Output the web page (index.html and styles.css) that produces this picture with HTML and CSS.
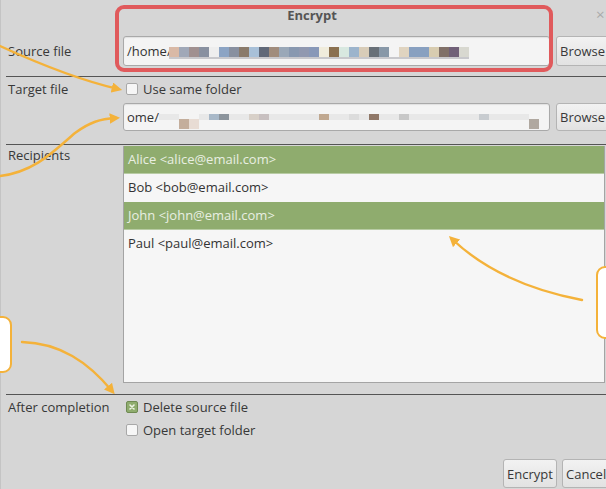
FILE: index.html
```html
<!DOCTYPE html>
<html>
<head>
<meta charset="utf-8">
<link rel="stylesheet" href="styles.css">
</head>
<body>
<div class="dialog">
  <div class="titlebar"><span class="title">Encrypt</span><span class="close">×</span></div>

  <div class="row source">
    <span class="lbl">Source file</span>
    <div class="field"><span class="ftext">/home/</span><span class="blur b-one"><i></i><i></i><i></i><i></i><i></i><i></i><i></i><i></i><i></i><i></i><i></i><i></i><i></i><i></i><i></i><i></i><i></i><i></i><i></i><i></i><i></i><i></i><i></i><i></i><i></i><i></i><i></i><i></i><i></i><i></i></span></div>
    <button class="btn browse">Browse</button>
  </div>
  <div class="sep"></div>

  <div class="row target">
    <span class="lbl">Target file</span>
    <span class="check"><span class="box"></span>Use same folder</span>
  </div>
  <div class="row target-input">
    <span class="lbl"></span>
    <div class="field small"><span class="ftext">ome/</span><span class="blur b-two"><i></i><i></i><i></i><i></i><i></i><i></i><i></i><i></i><i></i><i></i><i></i><i></i><i></i><i></i><i></i><i></i><i></i><i></i><i></i><i></i><i></i><i></i><i></i><i></i><i></i><i></i><i></i><i></i><i></i><i></i><i></i><i></i><i></i><i></i><i></i><i></i><i></i><i></i></span></div>
    <button class="btn browse small">Browse</button>
  </div>
  <div class="sep sep2"></div>

  <div class="row recipients">
    <span class="lbl top">Recipients</span>
    <div class="list">
      <div class="item sel">Alice &lt;alice@email.com&gt;</div>
      <div class="item">Bob &lt;bob@email.com&gt;</div>
      <div class="item sel">John &lt;john@email.com&gt;</div>
      <div class="item">Paul &lt;paul@email.com&gt;</div>
    </div>
  </div>
  <div class="sep sep3"></div>

  <div class="row after">
    <span class="lbl">After completion</span>
    <span class="check"><span class="box checked"><svg width="12" height="12" viewBox="0 0 12 12"><path d="M4 4 L8 8 M8 4 L4 8" stroke="#eef4e6" stroke-width="1.6" stroke-linecap="round"/></svg></span>Delete source file</span>
  </div>
  <div class="row after">
    <span class="lbl"></span>
    <span class="check"><span class="box"></span>Open target folder</span>
  </div>

  <div class="buttons">
    <button class="btn act">Encrypt</button>
    <button class="btn act cancel">Cancel</button>
  </div>
</div>

<svg class="annot" width="606" height="489" viewBox="0 0 606 489">
  <defs>
    <marker id="ah" viewBox="0 0 10 10" refX="6" refY="5" markerWidth="4.4" markerHeight="4.4" orient="auto">
      <path d="M0 0 L10 5 L0 10 z" fill="#f4b23a"/>
    </marker>
  </defs>
  <rect x="117" y="7" width="434" height="63" rx="7" fill="none" stroke="#e05a5c" stroke-width="4"/>
  <g fill="none" stroke="#f4b23a" stroke-width="2.4" stroke-linecap="round">
    <path d="M0 46 C35 62 75 79 118 89" marker-end="url(#ah)"/>
    <path d="M0 176 C35 172 55 150 75 133 C90 122 100 119 116 118" marker-end="url(#ah)"/>
    <path d="M582 300 C540 292 490 275 452 239" marker-end="url(#ah)"/>
    <path d="M22 342 C60 343 88 362 112 391" marker-end="url(#ah)"/>
  </g>
  <rect x="597" y="267" width="30" height="71" rx="8" fill="#ffffff" stroke="#f4b23a" stroke-width="2"/>
  <rect x="-20" y="317" width="31" height="55" rx="8" fill="#ffffff" stroke="#f4b23a" stroke-width="2"/>
</svg>
</body>
</html>
```

FILE: styles.css
```css
html, body {
  margin: 0;
  padding: 0;
}
body {
  width: 606px;
  height: 489px;
  overflow: hidden;
  background: #d6d6d6;
  font-family: "Open Sans", "Noto Sans", sans-serif;
  font-size: 13px;
  color: #383838;
  position: relative;
}
.dialog {
  padding-left: 7px;
  height: 489px;
  box-sizing: border-box;
  border-left: 1px solid #c4c4c4;
}
.titlebar {
  height: 36px;
  display: flex;
  align-items: flex-start;
}
.title {
  flex: 1;
  text-align: center;
  padding-left: 20px;
  line-height: 30px;
  font-weight: 700;
  color: #555;
}
.close {
  width: 10px;
  line-height: 28px;
  color: #aaa;
  font-size: 15px;
}
.row {
  display: flex;
  align-items: center;
}
.lbl {
  width: 115px;
  flex: none;
  white-space: nowrap;
}
.lbl.top {
  align-self: flex-start;
  line-height: 18px;
}
.source { height: 30px; }
.target { height: 24px; }
.target-input { height: 28px; margin-top: 2px; }
.after { height: 23px; }

.field {
  flex: none;
  width: 427px;
  height: 30px;
  box-sizing: border-box;
  border: 1px solid #a9a9a9;
  border-radius: 3px;
  background: #f4f4f4;
  box-shadow: inset 0 1px 1px rgba(0,0,0,0.08);
  display: flex;
  align-items: center;
  padding-left: 3px;
  overflow: hidden;
  white-space: nowrap;
}
.field.small { height: 28px; }
.ftext { color: #333; }
.blur {
  display: flex;
  align-items: center;
  height: 12px;
  filter: blur(0.4px);
}
.blur i {
  display: block;
  width: 10px;
  height: 10px;
  margin-top: 4px;
}
.b-one {
  margin-left: -3px;
  border-bottom: 2px solid #c8c8cc;
  padding-bottom: 1px;
}
.b-one i:nth-child(1) { background: #d9b9a6; }
.b-one i:nth-child(2) { background: #a0a8b8; }
.b-one i:nth-child(3) { background: #a09090; }
.b-one i:nth-child(4) { background: #8890a0; }
.b-one i:nth-child(5) { background: #eeeeee; }
.b-one i:nth-child(6) { background: #8ca4c4; }
.b-one i:nth-child(7) { background: #8890a0; }
.b-one i:nth-child(8) { background: #8a7a6a; }
.b-one i:nth-child(9) { background: #a8c0d8; }
.b-one i:nth-child(10) { background: #606878; }
.b-one i:nth-child(11) { background: #a08c7c; }
.b-one i:nth-child(12) { background: #9aa8b8; }
.b-one i:nth-child(13) { background: #8898b0; }
.b-one i:nth-child(14) { background: #9098b0; }
.b-one i:nth-child(15) { background: #8898b8; }
.b-one i:nth-child(16) { background: #f0ecdc; }
.b-one i:nth-child(17) { background: #8a7050; }
.b-one i:nth-child(18) { background: #d8e8e0; }
.b-one i:nth-child(19) { background: #9cb4cc; }
.b-one i:nth-child(20) { background: #d8ccb8; }
.b-one i:nth-child(21) { background: #687078; }
.b-one i:nth-child(22) { background: #8898a8; }
.b-one i:nth-child(23) { background: #f4f4f4; }
.b-one i:nth-child(24) { background: #e0d4c0; }
.b-one i:nth-child(25) { background: #88a0c0; }
.b-one i:nth-child(26) { background: #88a0c0; }
.b-one i:nth-child(27) { background: #d8ccb0; }
.b-one i:nth-child(28) { background: #807068; }
.b-one i:nth-child(29) { background: #706078; }
.b-one i:nth-child(30) { background: #d8d8d0; }

.b-two i {
  height: 6px;
  margin-top: 0;
  background: #e8e8e8;
}
.b-two i:nth-child(3) { background: #c4ae9c; height: 10px; margin-top: 14px; }
.b-two i:nth-child(4) { background: #e8dcd4; height: 10px; margin-top: 14px; }
.b-two i:nth-child(6) { background: #a8b8c8; }
.b-two i:nth-child(7) { background: #8c949c; }
.b-two i:nth-child(10) { background: #d8d0c8; }
.b-two i:nth-child(11) { background: #c8c0c0; }
.b-two i:nth-child(17) { background: #c0a890; }
.b-two i:nth-child(20) { background: #dcdcdc; }
.b-two i:nth-child(22) { background: #907868; }
.b-two i:nth-child(25) { background: #c8c8c8; }
.b-two i:nth-child(33) { background: #c8ccd0; }
.b-two i:nth-child(38) { background: #b0a8a0; height: 10px; margin-top: 14px; }

.btn {
  font-family: inherit;
  font-size: 13px;
  color: #383838;
  background: linear-gradient(#f2f2f2, #e2e2e2);
  border: 1px solid #b4b4b4;
  border-radius: 3px;
  padding: 0 3px;
  margin: 0;
  flex: none;
}
.browse {
  height: 30px;
  margin-left: 6px;
  width: 60px;
  text-align: left;
}
.browse.small { height: 28px; }

.sep {
  height: 1px;
  background: #555;
  margin-left: -2px;
  margin-top: 10px;
}
.sep2 { margin-top: 13px; }
.sep3 { margin-top: 11px; }

.check {
  display: flex;
  align-items: center;
  margin-left: 3px;
  white-space: nowrap;
}
.box {
  width: 12px;
  height: 12px;
  box-sizing: border-box;
  border: 1px solid #a8a8a8;
  border-radius: 2px;
  background: #f6f6f6;
  margin-right: 5px;
  display: flex;
}
.box.checked {
  background: #8fac6e;
  border-color: #6f8a52;
}
.box.checked svg { margin: -1px; }

.recipients {
  margin-top: 1px;
  align-items: flex-start;
}
.list {
  width: 482px;
  height: 237px;
  box-sizing: border-box;
  border: 1px solid #a4a4a4;
  border-top: none;
  background: #f6f6f6;
  flex: none;
}
.item {
  height: 28px;
  line-height: 27px;
  padding-left: 4px;
  color: #333;
  white-space: nowrap;
}
.item.sel {
  background: #8fac6e;
  color: #e9efe2;
  border-bottom: 1px solid #b8cca4;
  box-sizing: border-box;
}

.buttons {
  display: flex;
  justify-content: flex-end;
  gap: 5px;
  margin-top: 18px;
  margin-right: -8px;
}
.act {
  height: 29px;
  width: 54px;
}
.cancel { width: 52px; text-align: left; }

.annot {
  position: absolute;
  left: 0;
  top: 0;
  pointer-events: none;
  overflow: visible;
}
```
